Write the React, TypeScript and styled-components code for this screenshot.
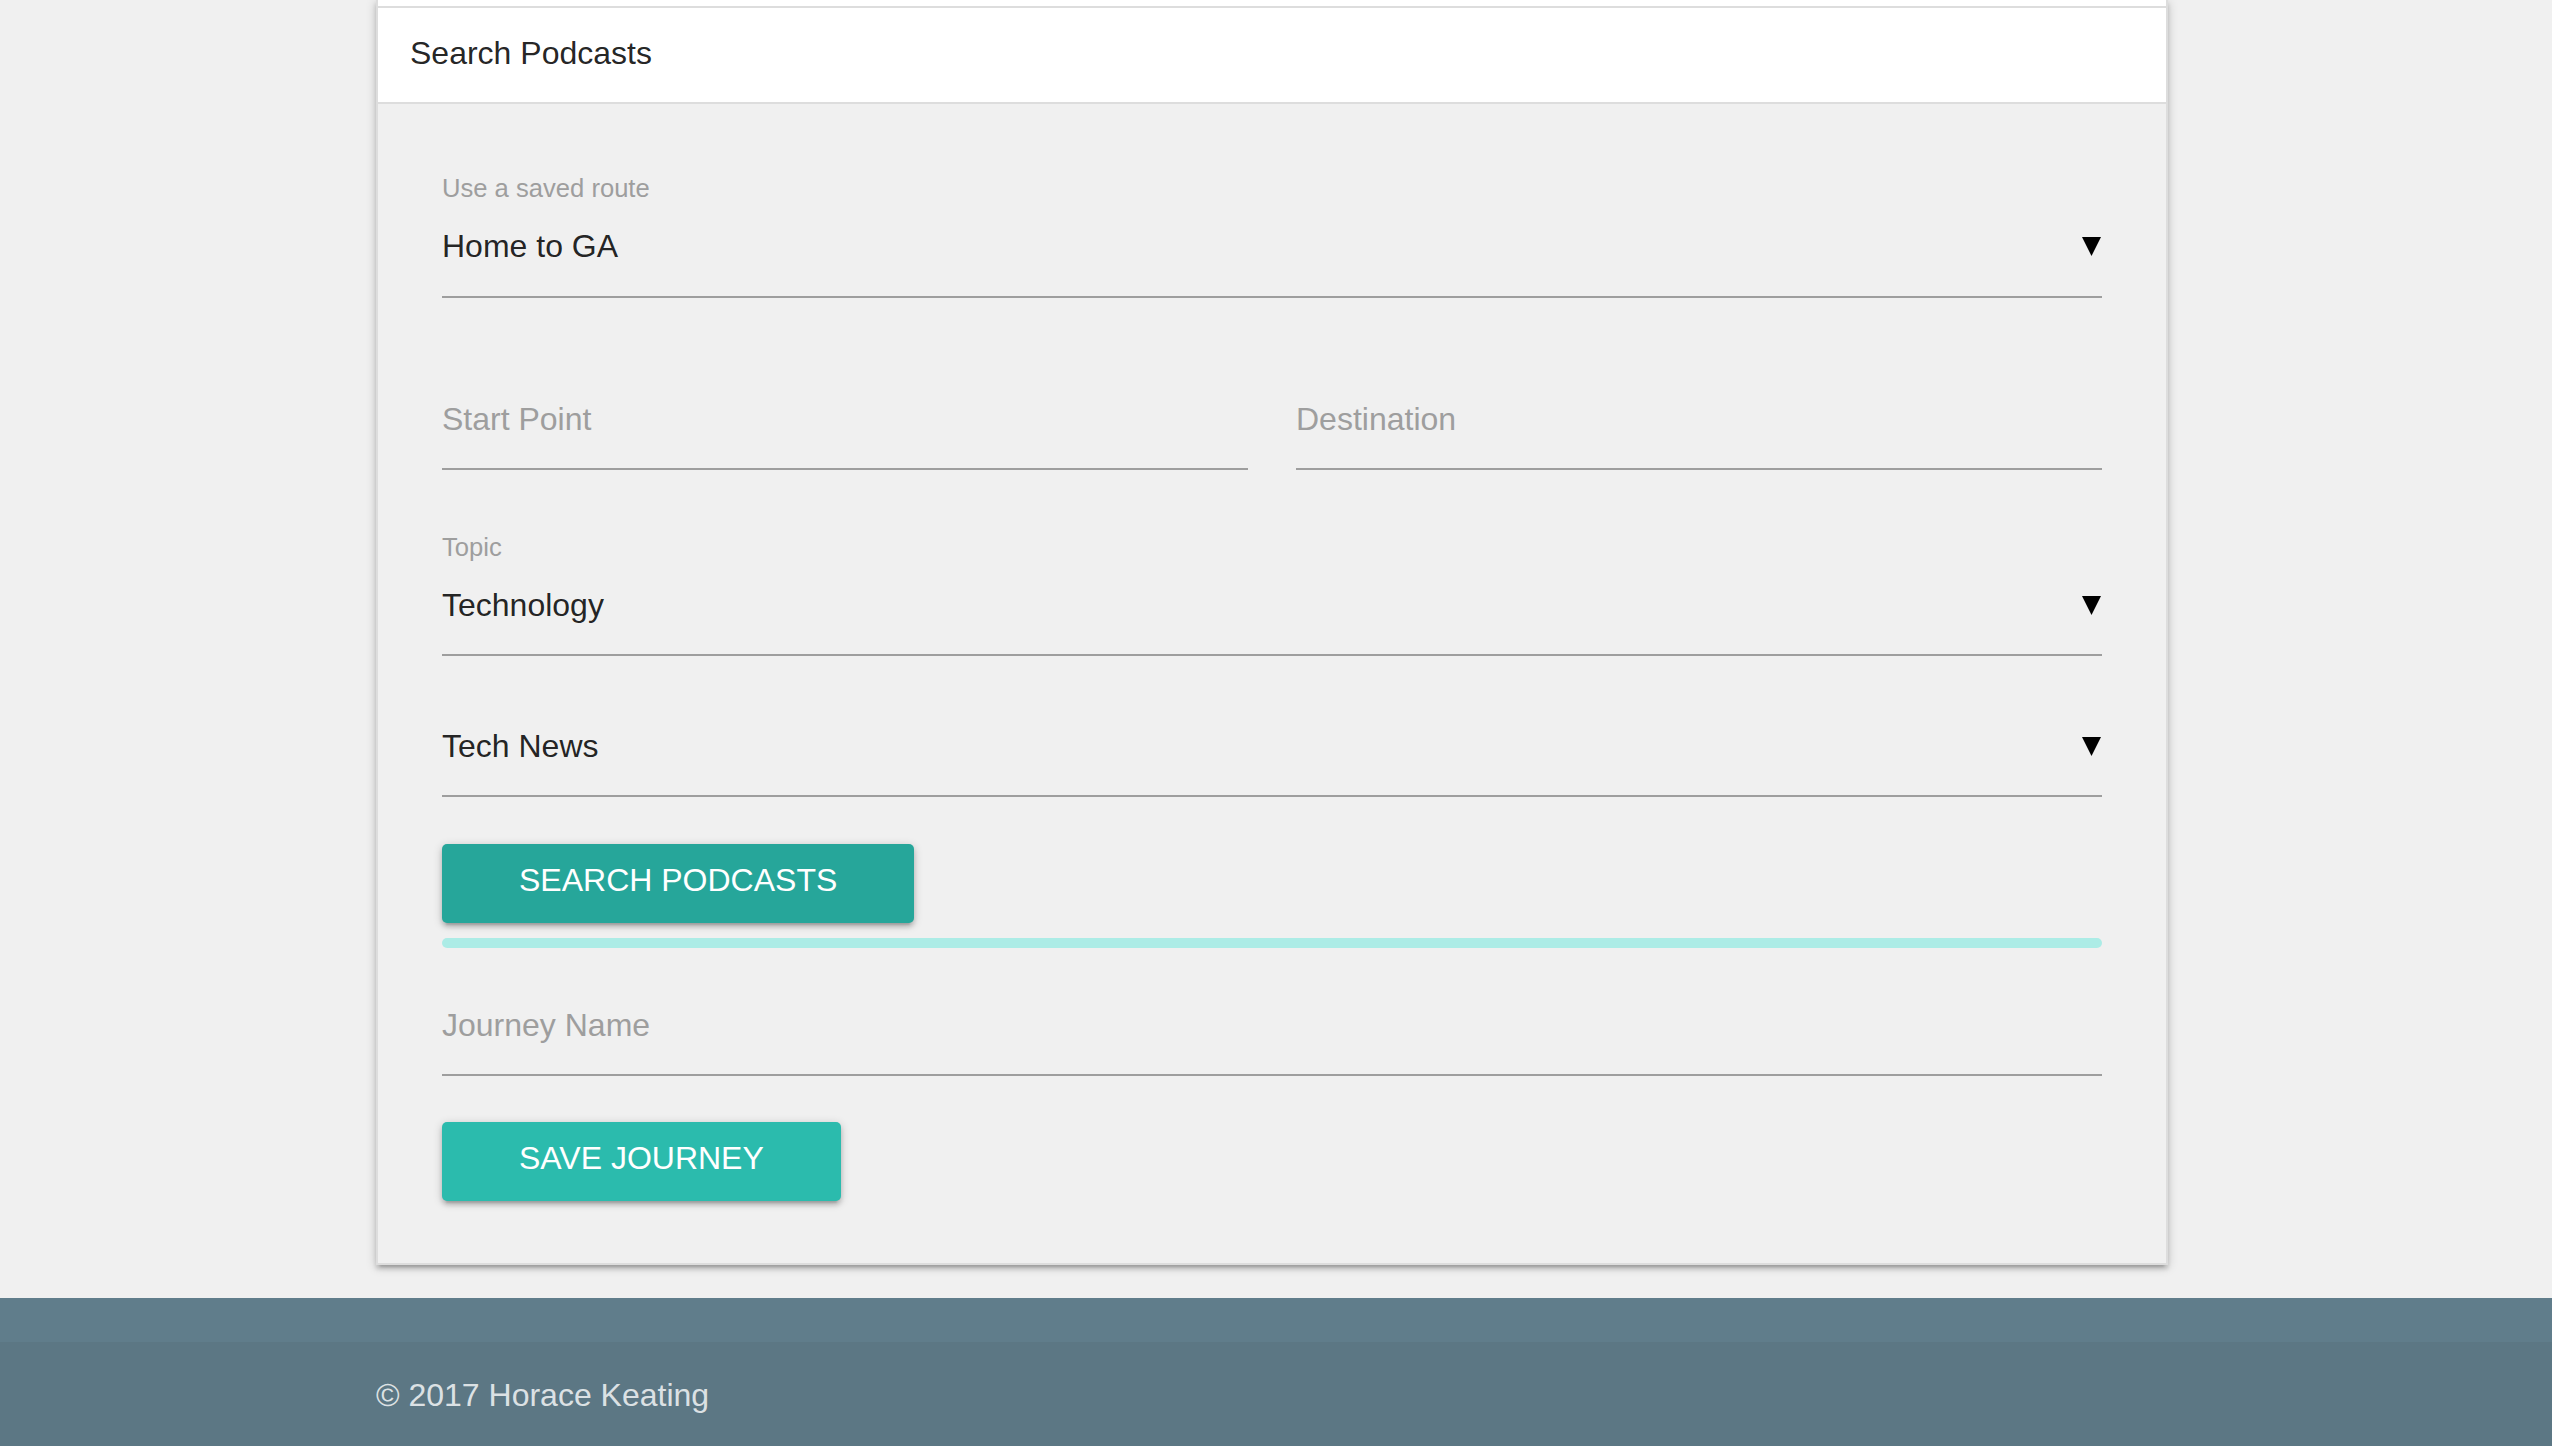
import React from "react";
import styled, { createGlobalStyle } from "styled-components";

const GlobalStyle = createGlobalStyle`
  * { box-sizing: border-box; }
  html, body {
    margin: 0;
    padding: 0;
    background: #f0f0f0;
  }
  body {
    font-family: "Liberation Sans", Arial, Helvetica, sans-serif;
    color: rgba(0, 0, 0, 0.87);
  }
`;

const Page = styled.div`
  display: flex;
  flex-direction: column;
  background: #f0f0f0;
`;

const Container = styled.div`
  width: 1792px;
  margin-left: 376px;
`;

const Collapsible = styled.ul`
  list-style: none;
  margin: 0;
  padding: 0;
  border-left: 2px solid #ddd;
  border-right: 2px solid #ddd;
  box-shadow: 0 4px 4px 0 rgba(0, 0, 0, 0.14), 0 6px 2px -4px rgba(0, 0, 0, 0.12),
    0 2px 10px 0 rgba(0, 0, 0, 0.2);
`;

const Item = styled.li`
  display: block;
`;

const PrevHeader = styled.div`
  height: 8px;
  background: #fff;
  border-bottom: 2px solid #ddd;
`;

const Header = styled.div`
  display: flex;
  align-items: center;
  padding: 21px 32px 25px;
  font-size: 32px;
  line-height: 48px;
  background: #fff;
  border-bottom: 2px solid #ddd;
  color: rgba(0, 0, 0, 0.87);
`;

const Body = styled.div`
  display: flex;
  flex-direction: column;
  padding: 68px 64px 62px;
  border-bottom: 2px solid #ddd;
  background: #f0f0f0;
`;

const Field = styled.div<{ $mt?: number }>`
  display: flex;
  flex-direction: column;
  margin-top: ${(p) => p.$mt ?? 0}px;
`;

const FieldLabel = styled.label`
  font-size: 25.6px;
  line-height: 32px;
  color: #9e9e9e;
  margin-bottom: 18px;
`;

const FieldControl = styled.div<{ $placeholder?: boolean; $pb?: number }>`
  display: flex;
  align-items: center;
  justify-content: space-between;
  font-size: 32px;
  line-height: 48px;
  padding-bottom: ${(p) => p.$pb ?? 25}px;
  border-bottom: 2px solid #9e9e9e;
  color: ${(p) => (p.$placeholder ? "#9e9e9e" : "rgba(0, 0, 0, 0.87)")};
`;

const TwoCol = styled.div<{ $mt?: number }>`
  display: grid;
  grid-template-columns: 1fr 1fr;
  column-gap: 48px;
  margin-top: ${(p) => p.$mt ?? 0}px;
`;

const CaretSvg = styled.svg`
  width: 19px;
  height: 19px;
  margin-right: 1px;
  flex: none;
`;

const Caret = () => (
  <CaretSvg viewBox="0 0 19 19">
    <polygon points="0,0 19,0 9.5,19" fill="#000" />
  </CaretSvg>
);

const ActionButton = styled.button<{ $tone: "dark" | "light"; $mt?: number }>`
  align-self: flex-start;
  margin-top: ${(p) => p.$mt ?? 0}px;
  height: 79px;
  padding: 0 77px 6px;
  border: none;
  border-radius: 5px;
  background: ${(p) => (p.$tone === "dark" ? "#26a69a" : "#2bbbad")};
  color: #fff;
  font-family: inherit;
  font-size: 32px;
  line-height: 73px;
  text-transform: uppercase;
  cursor: pointer;
  box-shadow: 0 4px 4px 0 rgba(0, 0, 0, 0.14), 0 6px 2px -4px rgba(0, 0, 0, 0.12),
    0 2px 10px 0 rgba(0, 0, 0, 0.2);
`;

const Progress = styled.div<{ $mt?: number }>`
  height: 10px;
  margin-top: ${(p) => p.$mt ?? 0}px;
  border-radius: 5px;
  background: #acece6;
`;

const Footer = styled.footer`
  margin-top: 33px;
  background: #607d8b;
`;

const FooterTop = styled.div`
  height: 44px;
`;

const Copyright = styled.div`
  background: rgba(51, 51, 51, 0.08);
  padding: 29px 0 27px;
  font-size: 32px;
  line-height: 48px;
  color: rgba(255, 255, 255, 0.8);
`;

export default function App() {
  return (
    <Page>
      <GlobalStyle />
      <Container>
        <Collapsible>
          <Item>
            <PrevHeader />
          </Item>
          <Item>
            <Header>Search Podcasts</Header>
            <Body>
              <Field>
                <FieldLabel>Use a saved route</FieldLabel>
                <FieldControl $pb={26}>
                  <span>Home to GA</span>
                  <Caret />
                </FieldControl>
              </Field>

              <TwoCol $mt={97}>
                <Field>
                  <FieldControl $placeholder>Start Point</FieldControl>
                </Field>
                <Field>
                  <FieldControl $placeholder>Destination</FieldControl>
                </Field>
              </TwoCol>

              <Field $mt={61}>
                <FieldLabel>Topic</FieldLabel>
                <FieldControl>
                  <span>Technology</span>
                  <Caret />
                </FieldControl>
              </Field>

              <Field $mt={66}>
                <FieldControl>
                  <span>Tech News</span>
                  <Caret />
                </FieldControl>
              </Field>

              <ActionButton $tone="dark" $mt={47}>
                Search Podcasts
              </ActionButton>
              <Progress $mt={15} />

              <Field $mt={53}>
                <FieldControl $placeholder>Journey Name</FieldControl>
              </Field>

              <ActionButton $tone="light" $mt={46}>
                Save Journey
              </ActionButton>
            </Body>
          </Item>
        </Collapsible>
      </Container>
      <Footer>
        <FooterTop />
        <Copyright>
          <Container>© 2017 Horace Keating</Container>
        </Copyright>
      </Footer>
    </Page>
  );
}
